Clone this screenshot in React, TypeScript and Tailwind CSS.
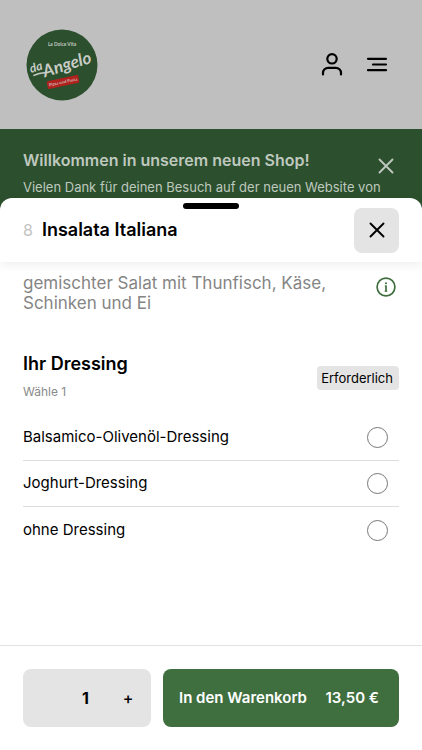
import { useState } from "react";

const dressings = ["Balsamico-Olivenöl-Dressing", "Joghurt-Dressing", "ohne Dressing"];

function Logo() {
  return (
    <svg viewBox="0 0 72 72" className="size-18" role="img" aria-label="La Dolce Vita da Angelo">
      <circle cx="36" cy="36" r="35.500" fill="#2c502e" />
      <text x="36" y="17" textAnchor="middle" fontSize="4.800" fontWeight="700" fill="#c4c9c2" fontFamily="Lato, sans-serif">
        La Dolce Vita
      </text>
      <g transform="translate(5 44) rotate(-17)" fill="#c9ccc6" fontFamily="Lato, sans-serif" fontStyle="italic" fontWeight="700">
        <text x="0" y="0" fontSize="12">da</text>
        <text x="12" y="8" fontSize="17">Angelo</text>
        <path d="M2 3.200Q7 2.200 15 4" fill="none" stroke="#c9ccc6" strokeWidth="1.400" strokeLinecap="round" />
      </g>
      <g transform="rotate(-12 37 53)">
        <rect x="21" y="49" width="32" height="8" rx="1" fill="#b1211d" />
        <text x="37" y="54.500" textAnchor="middle" fontSize="4.200" fontWeight="700" fill="#d0b9b4" fontFamily="Lato, sans-serif">
          Pizza und Pasta
        </text>
      </g>
    </svg>
  );
}

function CloseIcon() {
  return (
    <svg viewBox="0 0 16 16" className="size-4" fill="none" stroke="currentColor" strokeWidth="1.900" strokeLinecap="round" aria-hidden="true">
      <path d="M1.500 1.500l13 13M14.500 1.500l-13 13" />
    </svg>
  );
}

function SiteHeader() {
  return (
    <header className="flex h-[129px] items-center justify-between bg-[#bfbfbf] pr-[33px] pl-[26px]">
      <a href="#home">
        <Logo />
      </a>
      <nav className="flex items-center gap-[21px]">
        <button type="button" aria-label="Konto">
          <svg viewBox="0 0 24 24" className="size-6" fill="none" stroke="currentColor" strokeWidth="2.200" strokeLinecap="round" aria-hidden="true">
            <circle cx="12" cy="5.800" r="4.700" />
            <path d="M3 21.500v-1.500a5.200 5.200 0 0 1 5.200-5.200h7.600a5.200 5.200 0 0 1 5.200 5.200v1.500" />
          </svg>
        </button>
        <button type="button" aria-label="Menü">
          <svg viewBox="0 0 24 24" className="size-6" fill="none" stroke="currentColor" strokeWidth="2.200" strokeLinecap="round" aria-hidden="true">
            <path d="M3 5.800h18M8 11.500h13M3 17.200h18" />
          </svg>
        </button>
      </nav>
    </header>
  );
}

function WelcomeBanner() {
  return (
    <section className="flex items-start justify-between bg-[#2c502e] px-[23px] pt-[19px] pb-6 text-[#bfc8bf]">
      <div>
        <h2 className="text-base leading-6 font-semibold">Willkommen in unserem neuen Shop!</h2>
        <p className="mt-[5px] text-[13px] leading-5">
          Vielen Dank für deinen Besuch auf der neuen Website von da Angelo.
        </p>
      </div>
      <button type="button" aria-label="Hinweis schließen" className="mt-2.5 mr-[5px] -ml-4 shrink-0">
        <CloseIcon />
      </button>
    </section>
  );
}

function ProductSheet() {
  const [choice, setChoice] = useState("");
  const [amount, setAmount] = useState(1);

  return (
    <main role="dialog" aria-labelledby="product" className="absolute inset-x-0 top-[198px] bottom-0 flex flex-col rounded-t-xl bg-white">
      {/* drag handle */}
      <div className="absolute top-[5px] left-1/2 h-1.5 w-14 -translate-x-1/2 rounded-full bg-black" />

      <header className="flex h-16 shrink-0 items-center justify-between rounded-t-xl px-[23px] shadow-[0_2px_12px_rgba(0,0,0,0.08)]">
        <div className="flex items-center gap-[9px] text-lg">
          <span className="text-base text-[#c4c4c4]">8</span>
          <h1 id="product" className="font-semibold">Insalata Italiana</h1>
        </div>
        <button type="button" aria-label="Schließen" className="flex size-[45px] items-center justify-center rounded-lg bg-[#e4e4e4]">
          <CloseIcon />
        </button>
      </header>

      <div className="flex-1 overflow-y-auto px-[23px] pt-[11px]">
        <div className="flex items-start justify-between gap-6">
          <p className="text-[17px] leading-5 text-[#858585]">
            gemischter Salat mit Thunfisch, Käse, Schinken und Ei
          </p>
          <button type="button" aria-label="Informationen" className="mt-1 mr-[3px] shrink-0 text-[#3f6f3f]">
            <svg viewBox="0 0 20 20" className="size-5" fill="none" stroke="currentColor" strokeWidth="1.700" strokeLinecap="round" aria-hidden="true">
              <circle cx="10" cy="10" r="8.900" />
              <path d="M10 9v5" strokeWidth="1.700" />
              <path d="M9.200 9h.8M9 14.200h2" strokeWidth="0.900" />
              <circle cx="10" cy="6.200" r="1" fill="currentColor" stroke="none" />
            </svg>
          </button>
        </div>

        <fieldset className="mt-[37px]" aria-labelledby="dressing">
          <div className="flex items-end justify-between">
            <div>
              <h2 id="dressing" className="text-lg leading-7 font-semibold">Ihr Dressing</h2>
              <p className="mt-1 text-xs leading-5 text-[#8a8a8a]">Wähle 1</p>
            </div>
            <span className="mb-3 rounded-sm bg-[#e4e4e4] pr-1.5 pl-1 text-[13px] leading-6">Erforderlich</span>
          </div>
          <div className="mt-[13px] divide-y divide-[#dedede]">
            {dressings.map((name) => (
              <label key={name} className="flex h-[46px] items-center justify-between pr-[11px] text-[15px]">
                {name}
                <input
                  type="radio"
                  name="dressing"
                  value={name}
                  checked={choice === name}
                  onChange={() => setChoice(name)}
                  className="size-[21px] appearance-none rounded-full border border-[#777] checked:border-[6px] checked:border-[#3f6f3f]"
                />
              </label>
            ))}
          </div>
        </fieldset>
      </div>

      <footer className="flex gap-3 border-t border-[#e2e2e2] px-[23px] py-[23px]">
        <div className="flex h-[58px] w-32 shrink-0 items-center justify-end gap-[33px] rounded-lg bg-[#e4e4e4] pr-[17px]">
          <output className="text-base font-bold">{amount}</output>
          <button type="button" aria-label="Mehr" className="w-3 text-base font-medium" onClick={() => setAmount(amount + 1)}>
            +
          </button>
        </div>
        <button type="button" className="flex h-[58px] flex-1 items-center justify-between rounded-lg bg-[#3f6f3f] pr-5 pl-4 text-[15px] font-semibold whitespace-nowrap text-white">
          <span>In den Warenkorb</span>
          <span>13,50 €</span>
        </button>
      </footer>
    </main>
  );
}

export default function App() {
  return (
    <div className="relative h-screen overflow-hidden bg-[#bfbfbf] font-[Inter,sans-serif] text-black">
      <SiteHeader />
      <WelcomeBanner />
      <ProductSheet />
    </div>
  );
}
